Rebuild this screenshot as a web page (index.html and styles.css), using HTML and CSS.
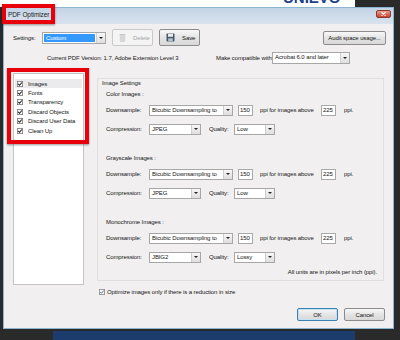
FILE: index.html
```html
<!DOCTYPE html>
<html>
  <head>
    <link rel="stylesheet" href="styles.css">
  </head>
  <body>
    <div class="topbar"><span class="brand">UNIEVO</span></div>

    <div class="window">
      <div class="titlebar">
        <span class="title">PDF Optimizer</span>
        <span class="close">
          <svg width="5" height="4" viewBox="0 0 5 4"><path d="M0.5 0.3 L4.5 3.7 M4.5 0.3 L0.5 3.7" stroke="#fff" stroke-width="1.1"/></svg>
        </span>
      </div>

      <div class="content">
        <div class="toolbar">
          <span class="label settings-label">Settings:</span>
          <div class="select custom-select">
            <span class="value"><span class="highlight">Custom</span></span>
            <span class="arrow"></span>
          </div>
          <div class="button tool disabled">
            <svg width="7" height="9" viewBox="0 0 7 9"><rect x="0.5" y="1" width="6" height="1.2" fill="#c9c9c9"/><rect x="1.2" y="2.5" width="4.6" height="6" rx="0.6" fill="#d8d8d8" stroke="#c4c4c4" stroke-width="0.5"/></svg>
            <span>Delete</span>
          </div>
          <div class="button tool">
            <svg width="9" height="9" viewBox="0 0 9 9"><rect x="0.5" y="0.5" width="8" height="8" rx="0.8" fill="#4a5866"/><rect x="2" y="0.8" width="5" height="3" fill="#e9edf1"/><rect x="2.2" y="5.3" width="4.6" height="3" fill="#b7c2cc"/></svg>
            <span>Save</span>
          </div>
          <div class="button audit">Audit space usage...</div>
        </div>

        <div class="version-row">
          <span class="version">Current PDF Version: 1.7, Adobe Extension Level 3</span>
          <span class="compat-label">Make compatible with:</span>
          <div class="select compat-select">
            <span class="value">Acrobat 6.0 and later</span>
            <span class="arrow"></span>
          </div>
        </div>

        <div class="main">
          <ul class="panel-list">
            <li class="selected"><svg class="check" viewBox="0 0 7 7"><rect x="0.5" y="0.5" width="6" height="6" fill="#fff" stroke="#7f7f7f"/><path d="M1.4 3.4 L3 5 L5.6 1.7" fill="none" stroke="#1b1b1b" stroke-width="1.2"/></svg>Images</li>
            <li><svg class="check" viewBox="0 0 7 7"><rect x="0.5" y="0.5" width="6" height="6" fill="#fff" stroke="#7f7f7f"/><path d="M1.4 3.4 L3 5 L5.6 1.7" fill="none" stroke="#1b1b1b" stroke-width="1.2"/></svg>Fonts</li>
            <li><svg class="check" viewBox="0 0 7 7"><rect x="0.5" y="0.5" width="6" height="6" fill="#fff" stroke="#7f7f7f"/><path d="M1.4 3.4 L3 5 L5.6 1.7" fill="none" stroke="#1b1b1b" stroke-width="1.2"/></svg>Transparency</li>
            <li><svg class="check" viewBox="0 0 7 7"><rect x="0.5" y="0.5" width="6" height="6" fill="#fff" stroke="#7f7f7f"/><path d="M1.4 3.4 L3 5 L5.6 1.7" fill="none" stroke="#1b1b1b" stroke-width="1.2"/></svg>Discard Objects</li>
            <li><svg class="check" viewBox="0 0 7 7"><rect x="0.5" y="0.5" width="6" height="6" fill="#fff" stroke="#7f7f7f"/><path d="M1.4 3.4 L3 5 L5.6 1.7" fill="none" stroke="#1b1b1b" stroke-width="1.2"/></svg>Discard User Data</li>
            <li><svg class="check" viewBox="0 0 7 7"><rect x="0.5" y="0.5" width="6" height="6" fill="#fff" stroke="#7f7f7f"/><path d="M1.4 3.4 L3 5 L5.6 1.7" fill="none" stroke="#1b1b1b" stroke-width="1.2"/></svg>Clean Up</li>
          </ul>

          <div class="settings-col">
            <div class="group">
              <div class="group-title">Image Settings</div>

              <div class="section">
                <div class="section-title">Color Images :</div>
                <div class="row">
                  <span class="row-label">Downsample:</span>
                  <div class="select sample-select"><span class="value">Bicubic Downsampling to</span><span class="arrow"></span></div>
                  <span class="input">150</span>
                  <span class="ppi-text">ppi for images above</span>
                  <span class="input">225</span>
                  <span class="ppi-end">ppi.</span>
                </div>
                <div class="row">
                  <span class="row-label">Compression:</span>
                  <div class="select comp-select"><span class="value">JPEG</span><span class="arrow"></span></div>
                  <span class="quality-label">Quality:</span>
                  <div class="select quality-select"><span class="value">Low</span><span class="arrow"></span></div>
                </div>
              </div>

              <div class="section">
                <div class="section-title">Grayscale Images :</div>
                <div class="row">
                  <span class="row-label">Downsample:</span>
                  <div class="select sample-select"><span class="value">Bicubic Downsampling to</span><span class="arrow"></span></div>
                  <span class="input">150</span>
                  <span class="ppi-text">ppi for images above</span>
                  <span class="input">225</span>
                  <span class="ppi-end">ppi.</span>
                </div>
                <div class="row">
                  <span class="row-label">Compression:</span>
                  <div class="select comp-select"><span class="value">JPEG</span><span class="arrow"></span></div>
                  <span class="quality-label">Quality:</span>
                  <div class="select quality-select"><span class="value">Low</span><span class="arrow"></span></div>
                </div>
              </div>

              <div class="section">
                <div class="section-title">Monochrome Images :</div>
                <div class="row">
                  <span class="row-label">Downsample:</span>
                  <div class="select sample-select"><span class="value">Bicubic Downsampling to</span><span class="arrow"></span></div>
                  <span class="input">150</span>
                  <span class="ppi-text">ppi for images above</span>
                  <span class="input">225</span>
                  <span class="ppi-end">ppi.</span>
                </div>
                <div class="row">
                  <span class="row-label">Compression:</span>
                  <div class="select comp-select"><span class="value">JBIG2</span><span class="arrow"></span></div>
                  <span class="quality-label">Quality:</span>
                  <div class="select quality-select"><span class="value">Lossy</span><span class="arrow"></span></div>
                </div>
              </div>

              <div class="units">All units are in pixels per inch (ppi).</div>
            </div>

            <div class="optimize-row">
              <svg class="check small" viewBox="0 0 7 7"><rect x="0.5" y="0.5" width="6" height="6" fill="#fff" stroke="#8f8f8f"/><path d="M1.4 3.4 L3 5 L5.6 1.7" fill="none" stroke="#3a5a8a" stroke-width="1"/></svg>
              <span>Optimize images only if there is a reduction in size</span>
            </div>
          </div>
        </div>

        <div class="actions">
          <div class="button action default">OK</div>
          <div class="button action">Cancel</div>
        </div>
      </div>
    </div>

    <div class="taskbar"></div>

    <!-- red annotation frames drawn over the screenshot -->
    <div class="mark mark-title"></div>
    <div class="mark mark-list"></div>
  </body>
</html>
```

FILE: styles.css
```css
body {
  margin: 0;
  width: 400px;
  height: 340px;
  overflow: hidden;
  position: relative;
  background-color: #2a2a2a;
  font-family: "Liberation Sans", Arial, sans-serif;
  font-size: 6px;
  letter-spacing: -0.1px;
  color: #161616;
}

.topbar {
  width: 355px;
  height: 7px;
  background-color: #fff;
  overflow: hidden;
}

.brand {
  display: block;
  padding-left: 283px;
  margin-top: -10px;
  font-weight: bold;
  font-size: 15px;
  line-height: 15px;
  color: #1d3f8c;
  letter-spacing: 0;
}

.window {
  box-sizing: border-box;
  width: 391px;
  margin-left: 3px;
  border: 1px solid #8cb6cf;
  background-color: #f1efef;
}

.titlebar {
  height: 16px;
  display: flex;
  align-items: flex-start;
  background: linear-gradient(#c4d4e6, #d9e3ee);
}

.title {
  padding-left: 4px;
  line-height: 14px;
  font-size: 6.5px;
  color: #222;
}

.close {
  margin-left: auto;
  margin-right: 2px;
  margin-top: 2px;
  width: 15px;
  height: 8px;
  border: 1px solid #8a3a30;
  border-radius: 2px;
  box-sizing: border-box;
  background: linear-gradient(#e9a08f, #c8432c);
  display: flex;
  align-items: center;
  justify-content: center;
}

.content {
  padding: 0 7px 7px 9px;
}

/* toolbar */
.toolbar {
  margin-top: 5px;
  height: 17px;
  display: flex;
  align-items: center;
}

.settings-label {
  width: 29px;
}

.select {
  box-sizing: border-box;
  height: 11px;
  display: flex;
  border: 1px solid #a7a7a7;
  background-color: #fff;
}

.select .value {
  flex: 1;
  padding-left: 2px;
  line-height: 9px;
  white-space: nowrap;
  overflow: hidden;
}

.select .arrow {
  width: 8px;
  border-left: 1px solid #cfcfcf;
  background: linear-gradient(#f7f7f7, #dedede);
  display: flex;
  align-items: center;
  justify-content: center;
}

.select .arrow::after {
  content: "";
  border-left: 2px solid transparent;
  border-right: 2px solid transparent;
  border-top: 2px solid #222;
}

.custom-select {
  width: 64px;
  height: 12px;
}

.custom-select .value {
  padding: 1px;
  display: flex;
}

.highlight {
  flex: 1;
  background-color: #3399ff;
  color: #fff;
  padding-left: 2px;
  line-height: 8px;
}

.button {
  box-sizing: border-box;
  display: flex;
  align-items: center;
  justify-content: center;
  white-space: nowrap;
  border: 1px solid #8c8c8c;
  border-radius: 2px;
  background: linear-gradient(#f8f8f8, #e4e4e4 50%, #d8d8d8);
}

.tool {
  width: 41px;
  height: 17px;
  margin-left: 6px;
  gap: 7px;
  justify-content: flex-start;
  padding-left: 6px;
}

.tool.disabled {
  border-color: #c9c9c9;
  background: #f4f4f4;
  color: #a5a5a5;
}

.audit {
  margin-left: auto;
  width: 63px;
  height: 14px;
}

/* version row */
.version-row {
  margin-top: 6px;
  height: 12px;
  display: flex;
  align-items: center;
}

.version {
  margin-left: 34px;
  width: 169px;
  white-space: nowrap;
}

.compat-label {
  width: 56px;
  white-space: nowrap;
}

.compat-select {
  width: 78px;
  height: 12px;
}

/* main area */
.main {
  margin-top: 7px;
  display: flex;
  align-items: flex-start;
}

.panel-list {
  box-sizing: border-box;
  width: 71px;
  height: 212px;
  margin: 2px 0 0 0;
  padding: 5px 1px 0 1px;
  list-style: none;
  background-color: #fff;
  border: 1px solid #c4c4c4;
}

.panel-list li {
  height: 9.4px;
  display: flex;
  align-items: center;
  padding-left: 2px;
  white-space: nowrap;
}

.panel-list li.selected {
  background-color: #ebebee;
}

.check {
  width: 6px;
  height: 6px;
  margin-right: 5px;
  flex-shrink: 0;
}

.settings-col {
  flex: 1;
  margin-left: 13px;
  margin-right: 2px;
  padding-top: 7px;
}

.group {
  border: 1px solid #e0dede;
  padding: 0 6px 3px 4px;
}

.group-title {
  height: 8px;
  line-height: 8px;
}

.section {
  margin-top: 17px;
  padding-left: 4px;
}

.group-title + .section {
  margin-top: 2px;
}

.section-title {
  height: 10px;
  line-height: 10px;
}

.row {
  height: 14px;
  margin-top: 4px;
  display: flex;
  align-items: center;
}

.row + .row {
  margin-top: 5px;
}

.row-label {
  width: 43px;
}

.sample-select {
  width: 84px;
}

.input {
  box-sizing: border-box;
  width: 15px;
  height: 11px;
  margin-left: 5px;
  padding-left: 1px;
  line-height: 9px;
  border: 1px solid #a9a9a9;
  background-color: #fff;
}

.ppi-text {
  margin-left: 7px;
  width: 56px;
  white-space: nowrap;
}

.ppi-text + .input {
  margin-left: 5px;
}

.ppi-end {
  margin-left: 8px;
}

.comp-select {
  width: 52px;
}

.quality-label {
  margin-left: 8px;
  width: 25px;
}

.quality-select {
  width: 41px;
}

.units {
  margin-top: 3px;
  height: 10px;
  line-height: 10px;
  text-align: right;
}

.optimize-row {
  margin-top: 6px;
  height: 10px;
  display: flex;
  align-items: center;
  padding-left: 2px;
  white-space: nowrap;
}

.check.small {
  margin-right: 2px;
}

.actions {
  margin-top: 11px;
  padding-right: 1px;
  display: flex;
  justify-content: flex-end;
  gap: 6px;
}

.action {
  width: 41px;
  height: 13px;
}

.action.default {
  border-color: #3c7fb1;
  box-shadow: inset 0 0 0 1px #bfe2f7;
}

.taskbar {
  margin-top: 2px;
  margin-left: 53px;
  width: 302px;
  height: 9px;
  background-color: #1c3c6e;
}

/* annotation frames */
.mark {
  position: absolute;
  box-sizing: border-box;
  border: 4px solid #e8000b;
  box-shadow: 0 1px 2px rgba(0, 0, 0, 0.4);
}

.mark-title {
  left: 2px;
  top: 4px;
  width: 53px;
  height: 20px;
}

.mark-list {
  left: 7px;
  top: 68px;
  width: 82px;
  height: 76px;
}
```
